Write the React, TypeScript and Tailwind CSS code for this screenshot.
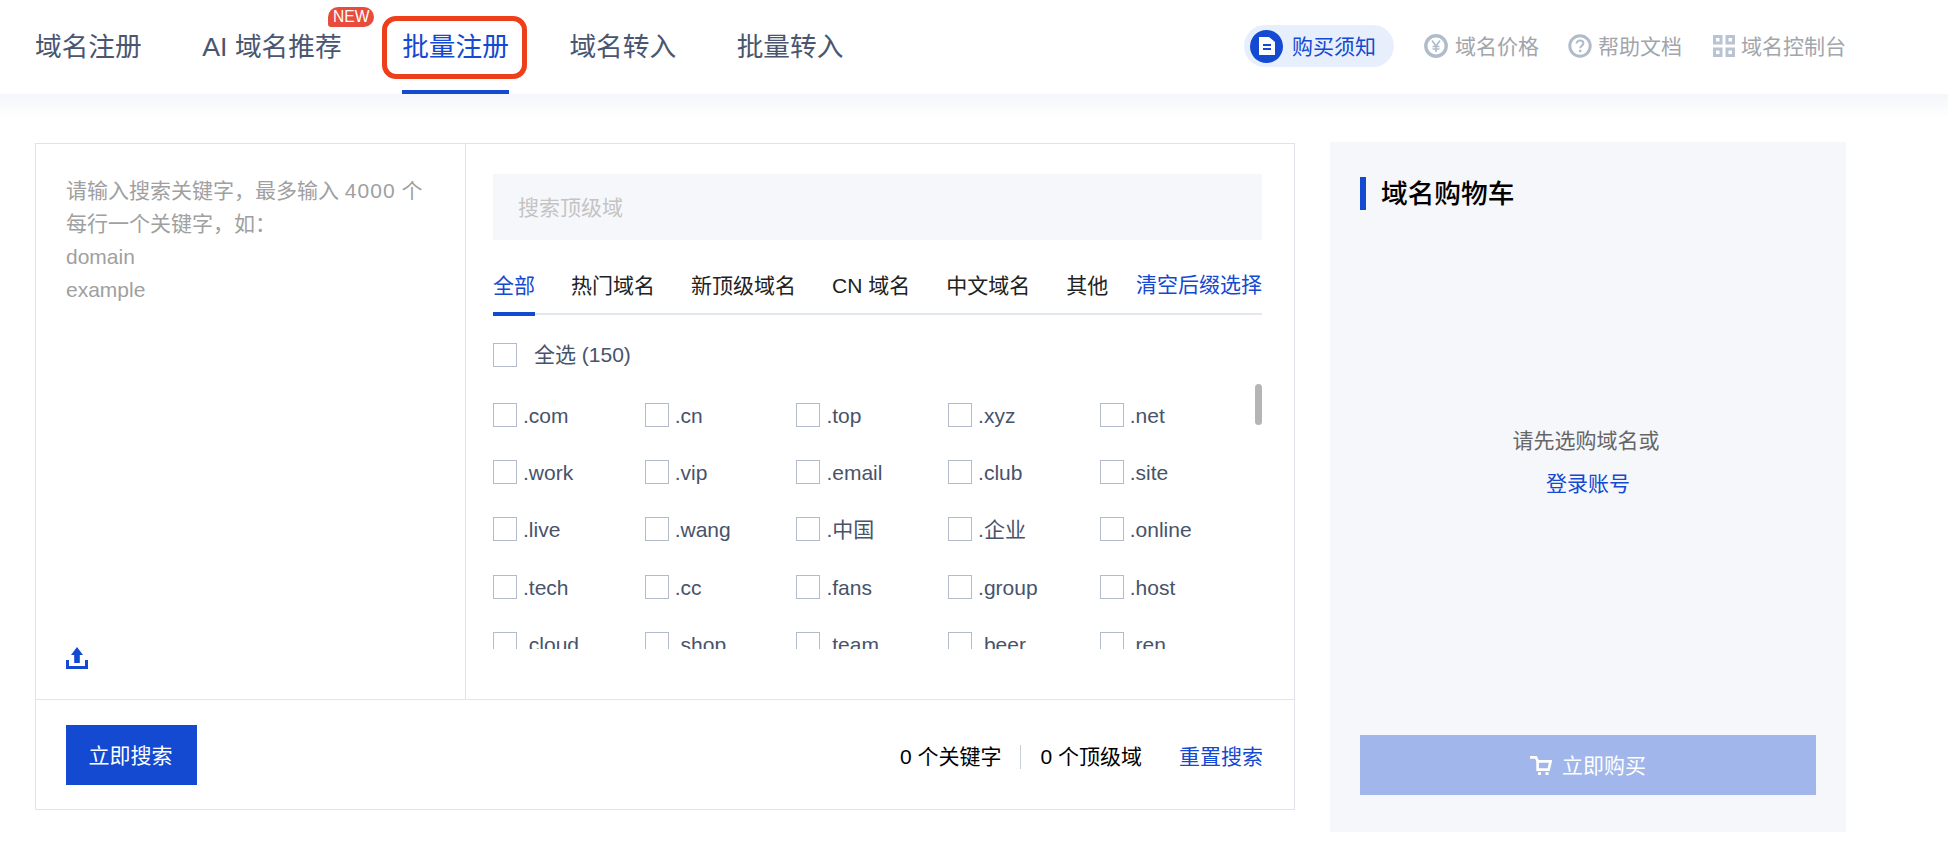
import React from "react";

const NAV = ["域名注册", "AI 域名推荐", "批量注册", "域名转入", "批量转入"];
const TABS = ["全部", "热门域名", "新顶级域名", "CN 域名", "中文域名", "其他"];
const TLDS = [
  ".com", ".cn", ".top", ".xyz", ".net",
  ".work", ".vip", ".email", ".club", ".site",
  ".live", ".wang", ".中国", ".企业", ".online",
  ".tech", ".cc", ".fans", ".group", ".host",
  ".cloud", ".shop", ".team", ".beer", ".ren",
];

function DocIcon() {
  return (
    <svg width="16" height="18" viewBox="0 0 16 18">
      <path fillRule="evenodd" fill="#fff" d="M0 0H10L16 5V18H0ZM4 7V9H12V7ZM4 11V13H12V11Z" />
    </svg>
  );
}
function YenIcon() {
  return (
    <svg width="24" height="24" viewBox="0 0 24 24" fill="none">
      <circle cx="12" cy="12" r="10.2" stroke="#b1bccb" strokeWidth="3.4" />
      <path d="M8 6.5L12 12L16 6.5M12 12V18M8.5 12.5H15.5M8.5 15H15.5" stroke="#b1bccb" strokeWidth="1.7" />
    </svg>
  );
}
function HelpIcon() {
  return (
    <svg width="24" height="24" viewBox="0 0 24 24" fill="none">
      <circle cx="12" cy="12" r="10.2" stroke="#b1bccb" strokeWidth="3" />
      <path d="M8.6 9.6C8.6 7.7 10 6.6 12 6.6C14 6.6 15.4 7.7 15.4 9.5C15.4 11.5 12.2 11.8 12.2 14.2" stroke="#b1bccb" strokeWidth="2" />
      <rect x="11" y="15.8" width="2.4" height="2.4" fill="#b1bccb" />
    </svg>
  );
}
function GridIcon() {
  return (
    <svg width="22" height="22" viewBox="0 0 22 22">
      <path
        fillRule="evenodd"
        fill="#b9c3d2"
        d="M0 0H9.5V9.5H0ZM3 3V6.5H6.5V3ZM12.5 0H22V9.5H12.5ZM15.5 3V6.5H19V3ZM0 12.5H9.5V22H0ZM3 15.5V19H6.5V15.5ZM12.5 12.5H22V22H12.5ZM15.5 15.5V19H19V15.5Z"
      />
    </svg>
  );
}
function UploadIcon() {
  return (
    <svg width="22" height="22" viewBox="0 0 22 22" className="block">
      <path fill="#1449d1" d="M11 0L17 8H13.8V16H8.2V8H5ZM0 13H3V19H19V13H22V22H0Z" />
    </svg>
  );
}
function CartIcon() {
  return (
    <svg width="22" height="19" viewBox="0 0 22 19" fill="none">
      <path d="M0 1.4H6L7.6 5V13.6H18.6L20.6 5.4H7" stroke="#fff" strokeWidth="2.6" />
      <rect x="8" y="16.2" width="3" height="2.8" fill="#fff" />
      <rect x="15.5" y="16.2" width="3" height="2.8" fill="#fff" />
    </svg>
  );
}

function Box() {
  return <span className="w-6 h-6 shrink-0 border border-[#b4bccb] bg-white" />;
}

export default function App() {
  return (
    <div
      className="w-[1948px] h-[850px] overflow-hidden bg-white text-[21px] leading-[33px]"
      style={{ fontFamily: '"Liberation Sans", "Noto Sans CJK SC", sans-serif' }}
    >
      <header className="relative h-[94px] flex items-center justify-between pl-[35px] pr-[102px]">
        <nav className="flex gap-[60.5px] text-[26.7px] leading-[36px] text-[#4a5670]">
          {NAV.map((n) => (
            <span key={n} className={n === "批量注册" ? "relative text-[#1449d1]" : "relative"}>
              {n}
              {n === "AI 域名推荐" && (
                <span className="absolute left-[126px] -top-[22px] w-[46px] h-[20px] flex items-center justify-center rounded-t-[10px] rounded-br-[10px] rounded-bl-[3px] bg-[#e74c3c] text-white text-[15.6px] leading-[20px]">
                  NEW
                </span>
              )}
              {n === "批量注册" && (
                <>
                  <span className="absolute left-[-20px] right-[-18px] top-[-13px] h-[63px] border-[5px] border-[#ee3f1b] rounded-[14px]" />
                  <span className="absolute left-0 right-0 top-[61px] h-1 bg-[#1449d1]" />
                </>
              )}
            </span>
          ))}
        </nav>
        <div className="flex items-center -mt-[2px] text-[#a1a5ac]">
          <span className="flex items-center h-[42px] w-[150px] rounded-full bg-[#e7effd] pl-[6px] text-[#1449d1] mr-[30px]">
            <span className="w-[33px] h-[33px] rounded-full bg-[#1449d1] flex items-center justify-center mr-[9px]">
              <DocIcon />
            </span>
            购买须知
          </span>
          <span className="flex items-center gap-[7px] mr-[29px]">
            <YenIcon />
            域名价格
          </span>
          <span className="flex items-center gap-[6px] mr-[31px]">
            <HelpIcon />
            帮助文档
          </span>
          <span className="flex items-center gap-[6px]">
            <GridIcon />
            域名控制台
          </span>
        </div>
        <div className="absolute left-0 right-0 top-full h-[24px] bg-gradient-to-b from-[#f5f6fb] to-white" />
      </header>

      <main className="relative flex items-start pl-[35px] pt-[48px]">
        <section className="mt-px w-[1260px] h-[667px] border border-[#e0e3ec] flex flex-col">
          <div className="flex h-[556px] border-b border-[#e0e5ee]">
            <div className="w-[430px] shrink-0 border-r border-[#e0e3ec] pl-[30px] pt-[30px] pb-[30px] flex flex-col justify-between text-[#a0a0a0]">
              <div>
                <div>
                  请输入搜索关键字，最多输入 <span className="tracking-[1px]">4000</span> 个
                </div>
                <div>每行一个关键字，如：</div>
                <div>domain</div>
                <div>example</div>
              </div>
              <UploadIcon />
            </div>
            <div className="relative flex-1 pl-[27px] pr-[32px] pt-[30px]">
              <div className="h-[66px] bg-[#f6f7fb] flex items-center pl-[25px] text-[#c4c4c4]">搜索顶级域</div>
              <div className="mt-[22px] h-[53px] flex justify-between border-b-2 border-[#e1e6ef]">
                <div className="flex gap-[36px]">
                  {TABS.map((t) => (
                    <span
                      key={t}
                      className={
                        t === "全部"
                          ? "relative h-[53px] pt-[7px] text-[#1449d1]"
                          : "h-[53px] pt-[7px] text-[#222]"
                      }
                    >
                      {t}
                      {t === "全部" && <span className="absolute left-0 right-0 bottom-[-1px] h-1 bg-[#1449d1]" />}
                    </span>
                  ))}
                </div>
                <span className="pt-[6px] text-[#1449d1]">清空后缀选择</span>
              </div>
              <label className="mt-[23px] flex items-center gap-[17px] text-[#47536b]">
                <Box />
                全选 (150)
              </label>
              <div className="mt-[15px] h-[263px] overflow-hidden grid grid-cols-[repeat(5,151.7px)] auto-rows-[57.2px] text-[#47536b]">
                {TLDS.map((t) => (
                  <label key={t} className="flex items-start gap-[6px] pt-[17px] h-[57.2px]">
                    <Box />
                    <span className="-mt-[4px]">{t}</span>
                  </label>
                ))}
              </div>
              <span className="absolute right-[32px] top-[240px] w-[7px] h-[41px] rounded-full bg-[#b5b5b5]" />
            </div>
          </div>
          <div className="flex-1 flex items-center justify-between pl-[30px] pr-[31px]">
            <button className="w-[131px] h-[60px] pr-[2px] pt-[1px] bg-[#1449d1] text-white">立即搜索</button>
            <div className="flex items-center text-black pt-[4px]">
              <span>0 个关键字</span>
              <span className="w-px h-[24px] bg-[#c9ced8] mx-[19px]" />
              <span>0 个顶级域</span>
              <span className="ml-[37px] text-[#1449d1]">重置搜索</span>
            </div>
          </div>
        </section>

        <aside className="ml-[35px] w-[516px] h-[690px] bg-[#f6f7fb] px-[30px] pt-[35px] pb-[37px] flex flex-col">
          <h2 className="flex items-center h-[33px] border-l-[6px] border-[#1449d1] pl-[15px] text-[26.7px] font-medium text-black">
            <span className="pt-[1px]">域名购物车</span>
          </h2>
          <div className="flex-1 flex flex-col items-center pt-[214px] gap-[10px]">
            <span className="mr-[4px] text-[#666]">请先选购域名或</span>
            <span className="text-[#1449d1]">登录账号</span>
          </div>
          <button className="h-[60px] bg-[#a1b6ea] text-white flex items-center justify-center gap-[10px]">
            <CartIcon />
            立即购买
          </button>
        </aside>
      </main>
    </div>
  );
}
